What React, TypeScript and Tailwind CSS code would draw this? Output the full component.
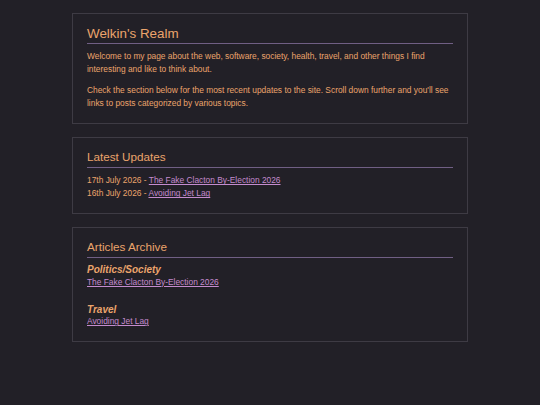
const updates = [
  { date: '17th July 2026', title: 'The Fake Clacton By-Election 2026' },
  { date: '16th July 2026', title: 'Avoiding Jet Lag' },
];

const categories = [
  { name: 'Politics/Society', posts: ['The Fake Clacton By-Election 2026'] },
  { name: 'Travel', posts: ['Avoiding Jet Lag'] },
];

function Section({
  title,
  big,
  children,
}: {
  title: string;
  big?: boolean;
  children: React.ReactNode;
}) {
  return (
    <section className="border border-[#3e3b44] px-[14px] pt-[13px] pb-[13px]">
      <h2
        className={
          (big ? 'text-[13.4px] leading-[1] pb-[3px]' : 'text-[11.7px] leading-[1.1] pb-[3px]') +
          ' mb-[6px] border-b border-[#705f84] text-[#eba46c]'
        }
      >
        {title}
      </h2>
      {children}
    </section>
  );
}

function PostLink({ children }: { children: React.ReactNode }) {
  return (
    <a href="#" className="text-[#c48bce] underline">
      {children}
    </a>
  );
}

export default function App() {
  return (
    <div className="min-h-[405px] bg-[#222027] pt-[13px] font-['Liberation_Sans',Arial,sans-serif] text-[8.4px] leading-[13px] text-[#eba46c]">
      <main className="mx-auto flex w-[396px] flex-col gap-[13px]">
        <Section title="Welkin's Realm" big>
          <p className="mb-[8px]">
            Welcome to my page about the web, software, society, health,
            travel, and other things I find interesting and like to think
            about.
          </p>
          <p>
            Check the section below for the most recent updates to the site.
            Scroll down further and you'll see links to posts categorized by
            various topics.
          </p>
        </Section>

        <Section title="Latest Updates">
          <ul>
            {updates.map((u) => (
              <li key={u.title}>
                {u.date} - <PostLink>{u.title}</PostLink>
              </li>
            ))}
          </ul>
        </Section>

        <Section title="Articles Archive">
          <div className="flex flex-col gap-[15px]">
            {categories.map((c) => (
              <div key={c.name}>
                <h3 className="text-[10px] leading-[1.15] font-bold italic">
                  {c.name}
                </h3>
                {c.posts.map((p) => (
                  <div key={p}>
                    <PostLink>{p}</PostLink>
                  </div>
                ))}
              </div>
            ))}
          </div>
        </Section>
      </main>
    </div>
  );
}
